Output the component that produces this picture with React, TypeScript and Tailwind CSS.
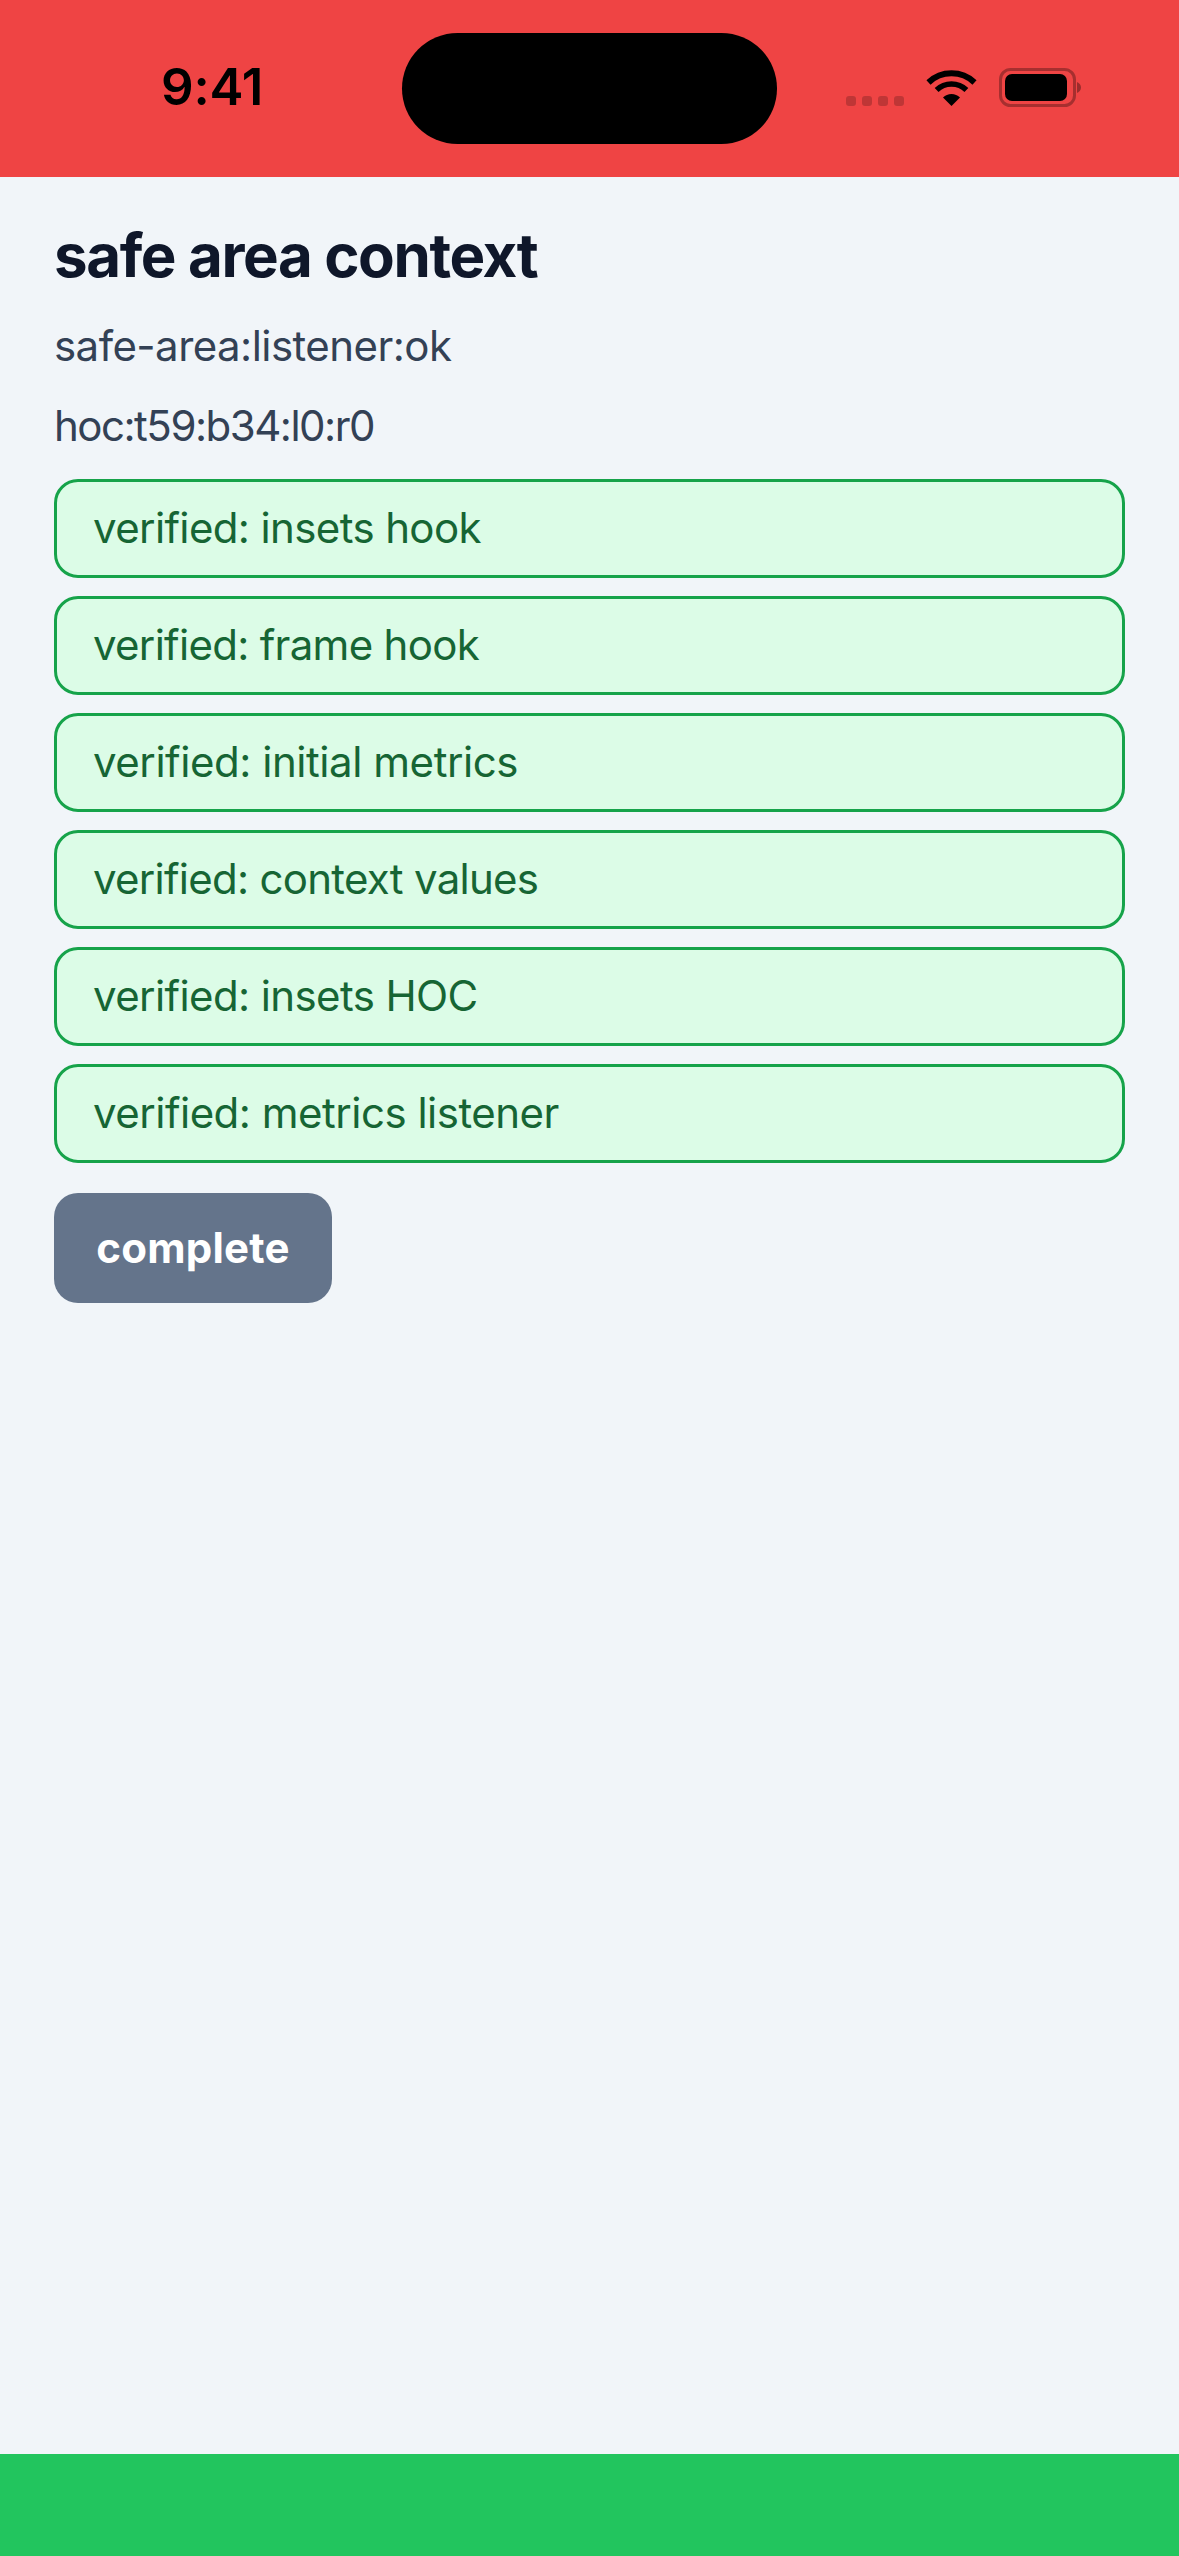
const ROWS = [
  { label: "verified: insets hook", tracking: "tracking-[-0.62px]" },
  { label: "verified: frame hook", tracking: "tracking-[-0.7px]" },
  { label: "verified: initial metrics", tracking: "tracking-[-0.45px]" },
  { label: "verified: context values", tracking: "tracking-[-0.72px]" },
  { label: "verified: insets HOC", tracking: "tracking-[-0.6px]" },
  { label: "verified: metrics listener", tracking: "tracking-[-0.5px]" },
];

function StatusIcons() {
  return (
    <div className="flex items-start">
      {/* Signal dots */}
      <div className="flex gap-[6px] mt-[96px]">
        <div className="w-[10px] h-[10px] rounded-[3px] bg-black/20" />
        <div className="w-[10px] h-[10px] rounded-[3px] bg-black/20" />
        <div className="w-[10px] h-[10px] rounded-[3px] bg-black/20" />
        <div className="w-[10px] h-[10px] rounded-[3px] bg-black/20" />
      </div>
      {/* Wifi */}
      <svg className="ml-[22px] mt-[69px]" width="51" height="37" viewBox="0 0 51 37" fill="none">
        <path d="M25.5 37L17 28.5A12 12 0 0 1 34 28.5Z" fill="#000" />
        <path d="M10.6 21.1A21.5 21.5 0 0 1 40.4 21.1" stroke="#000" strokeWidth="5.5" />
        <path d="M2.5 13.5A33.5 33.5 0 0 1 48.5 13.5" stroke="#000" strokeWidth="6" />
      </svg>
      {/* Battery */}
      <svg className="ml-[22px] mt-[68px]" width="82" height="39" viewBox="0 0 82 39" fill="none">
        <rect x="1.5" y="1.5" width="74" height="36" rx="10" stroke="#000" strokeOpacity="0.3" strokeWidth="3" />
        <rect x="6" y="6" width="62" height="27" rx="7" fill="#000" />
        <path d="M78 14V25C80.5 24 82 22 82 19.5C82 17 80.5 15 78 14Z" fill="#000" fillOpacity="0.35" />
      </svg>
    </div>
  );
}

export default function App() {
  return (
    <div className="h-screen flex flex-col bg-[#f1f5f9] font-['Inter','Liberation_Sans',sans-serif]">
      {/* Top inset */}
      <div className="h-[177px] bg-[#ef4444] flex items-start shrink-0">
        <div className="w-[402px] pl-[161px] pt-[56px] text-[51px] leading-[62px] font-semibold text-black tracking-[-0.2px]">
          9:41
        </div>
        <div className="mt-[33px] w-[375px] h-[111px] rounded-full bg-black" />
        <div className="ml-[69px]">
          <StatusIcons />
        </div>
      </div>

      <main className="flex-1 flex flex-col px-[54px] pt-[36px]">
        <h1 className="text-[60px] leading-[84px] font-bold text-[#0f172a] tracking-[-1.4px]">safe area context</h1>
        <p className="mt-[19px] text-[42px] leading-[60px] text-[#334155] tracking-[-0.55px]">safe-area:listener:ok</p>
        <p className="mt-[20px] text-[42px] leading-[60px] text-[#334155] tracking-[-1.5px]">hoc:t59:b34:l0:r0</p>

        <div className="mt-[23px] flex flex-col gap-[18px]">
          {ROWS.map((row) => (
            <div
              key={row.label}
              className={`h-[99px] flex items-center px-[36px] pb-[2px] rounded-[24px] border-[3px] border-[#16a34a] bg-[#dcfce7] text-[42px] text-[#166534] ${row.tracking}`}
            >
              {row.label}
            </div>
          ))}
        </div>

        <button className="mt-[30px] self-start h-[110px] w-[278px] pb-[2px] rounded-[24px] bg-[#64748b] text-white text-[42px] font-bold tracking-[0.2px]">
          complete
        </button>
      </main>

      {/* Bottom inset */}
      <div className="h-[102px] bg-[#22c55e] shrink-0" />
    </div>
  );
}
